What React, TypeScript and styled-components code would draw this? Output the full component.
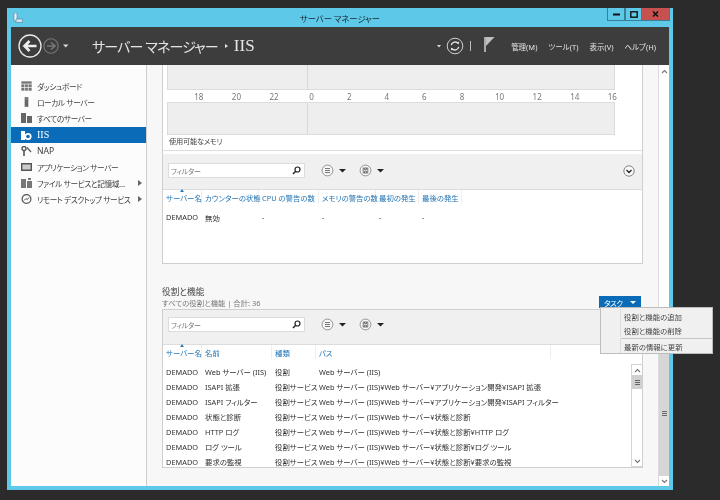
import React from "react";
import styled, { createGlobalStyle } from "styled-components";

const GlobalStyle = createGlobalStyle`
    html, body {
        margin: 0;
        padding: 0;
        background: #2b2b2b;
    }
    body {
        width: 720px;
        height: 500px;
        overflow: hidden;
        font-family: "Noto Sans", "Noto Sans CJK JP", sans-serif;
        font-feature-settings: "palt";
        font-size: 7.4px;
        color: #333;
    }
`;

const Page = styled.div`
    width: 720px;
    height: 500px;
    padding: 8px 47px 10px 7px;
    box-sizing: border-box;
    filter: blur(0.4px);
`;
const Window = styled.div`
    position: relative;
    height: 482px;
    display: flex;
    flex-direction: column;
    background: #5ec8e8;
    padding: 0 4px 4px;
    box-sizing: border-box;
`;
const TitleBar = styled.div`
    position: relative;
    height: 19px;
    flex: none;
    display: flex;
    align-items: center;
    justify-content: center;
    font-size: 8.3px;
    color: #14222a;
`;
const AppIcon = styled.svg`
    position: absolute;
    left: 2px;
    top: 5px;
`;
const WindowButtons = styled.div`
    position: absolute;
    top: 0;
    right: -1px;
    display: flex;
    height: 13px;
`;
const WindowButton = styled.div<{ $w: number; $close?: boolean }>`
    width: ${(p) => p.$w}px;
    display: flex;
    align-items: center;
    justify-content: center;
    box-sizing: border-box;
    background: ${(p) => (p.$close ? "#c75050" : "#5ec8e8")};
    border: 1px solid #3a7f96;
    border-top: none;
    border-left: ${(p) => (p.$close ? "none" : "1px solid #3a7f96")};
`;
const Header = styled.div`
    height: 38px;
    flex: none;
    display: flex;
    align-items: center;
    background: #3d3d3d;
    color: #e8e8e8;
`;
const NavIcons = styled.svg`
    margin-left: 6px;
    flex: none;
`;
const Crumb = styled.div`
    margin-left: 15px;
    font-size: 14px;
    letter-spacing: -0.85px;
    color: #e4e4e4;
    display: flex;
    align-items: center;
    flex: 1;
`;
const CrumbArrow = styled.span`
    width: 0;
    height: 0;
    margin: 0 6px 0 7px;
    border-left: 3px solid #e8e8e8;
    border-top: 2.5px solid transparent;
    border-bottom: 2.5px solid transparent;
`;
const SerifLabel = styled.span<{ $size: number }>`
    font-family: "Liberation Serif", serif;
    font-size: ${(p) => p.$size}px;
    letter-spacing: 0;
`;
const HeaderIcons = styled.svg`
    flex: none;
    margin-right: 8px;
`;
const MenuBar = styled.div`
    display: flex;
    font-size: 7.5px;
    padding-right: 13px;
    gap: 11px;
    color: #e2e2e2;
`;
const Body = styled.div`
    flex: 1;
    min-height: 0;
    display: flex;
    background: #f8f8f8;
`;
const Sidebar = styled.div`
    width: 135px;
    flex: none;
    padding-top: 13px;
    box-sizing: content-box;
    background: #fcfcfc;
    border-right: 1px solid #cfcfcf;
`;
const NavItem = styled.div<{ $active?: boolean }>`
    height: 16.2px;
    display: flex;
    align-items: center;
    padding-left: 10px;
    gap: 5px;
    font-size: 7.7px;
    letter-spacing: -0.4px;
    background: ${(p) => (p.$active ? "#0a6cb8" : "transparent")};
    color: ${(p) => (p.$active ? "#fff" : "#3c3c3c")};
`;
const NavIcon = styled.svg`
    flex: none;
`;
const NavLabel = styled.span`
    flex: 1;
    min-width: 0;
    white-space: nowrap;
`;
const LatinLabel = styled.span`
    font-size: 8.6px;
    letter-spacing: 0;
`;
const NavArrow = styled.span`
    flex: none;
    width: 0;
    height: 0;
    margin-right: 4px;
    border-left: 4px solid #666;
    border-top: 3px solid transparent;
    border-bottom: 3px solid transparent;
`;
const Content = styled.div`
    flex: 1;
    min-width: 0;
    overflow: hidden;
    padding: 0 17px 0 15px;
    background: #f7f7f7;
`;
const Panel = styled.div<{ $framed?: boolean }>`
    width: 479px;
    background: #fff;
    border-left: 1px solid #cfcfcf;
    border-right: 1px solid #cfcfcf;
    border-bottom: 1px solid #cfcfcf;
    border-top: ${(p) => (p.$framed ? "1px solid #cfcfcf" : "none")};
    position: relative;
`;
const ChartArea = styled.div`
    height: 85px;
    padding-left: 4px;
    border-bottom: 1px solid #dedede;
`;
const ChartBox = styled.div<{ $h: number }>`
    width: 448px;
    height: ${(p) => p.$h}px;
    box-sizing: border-box;
    background: #eeeeee;
    border: 1px solid #dcdcdc;
    border-top: ${(p) => (p.$h === 25 ? "none" : "1px solid #dcdcdc")};
    display: flex;
    justify-content: flex-start;
`;
const ChartMark = styled.div`
    width: 1px;
    margin-left: 139px;
    background: #c5deea;
`;
const Axis = styled.div`
    height: 12px;
    width: 460px;
    display: grid;
    grid-template-columns: repeat(12, 37.6px);
    margin-left: 13px;
    align-items: center;
    font-size: 8px;
    color: #777;
`;
const AxisTick = styled.span`
    text-align: center;
`;
const Caption = styled.div`
    padding-left: 2px;
    font-size: 7.2px;
    line-height: 12px;
    letter-spacing: -0.2px;
    color: #444;
`;
const Toolbar = styled.div<{ $top?: boolean; $h: number; $lift: number }>`
    height: ${(p) => p.$h}px;
    margin-top: ${(p) => (p.$top ? "3px" : "0")};
    box-sizing: border-box;
    background: #f0f0f0;
    border-bottom: 1px solid #dcdcdc;
    display: flex;
    align-items: center;
    padding: 0 7px ${(p) => p.$lift}px 5px;
`;
const FilterBox = styled.div`
    width: 137px;
    height: 15px;
    margin-right: 8px;
    flex: none;
    box-sizing: border-box;
    padding: 0 3px 0 2px;
    display: flex;
    align-items: center;
    justify-content: space-between;
    background: #fff;
    border: 1px solid #dcdcdc;
    color: #777;
    font-size: 7px;
    letter-spacing: -0.2px;
`;
const ToolGroup = styled.svg`
    flex: none;
    margin-left: 8px;
`;
const ToolSpacer = styled.div`
    flex: 1;
`;
const HeaderRow = styled.div<{ $cols: string }>`
    height: 14px;
    display: grid;
    grid-template-columns: ${(p) => p.$cols};
`;
const HeaderCell = styled.div`
    position: relative;
    display: flex;
    align-items: center;
    padding-left: 3px;
    border-right: 1px solid #eeeeee;
    color: #1f72b3;
    white-space: nowrap;
`;
const SortMark = styled.span`
    position: absolute;
    top: -1px;
    left: 17px;
    border-bottom: 3px solid #2b7bb9;
    border-left: 2px solid transparent;
    border-right: 2px solid transparent;
`;
const DataRow = styled.div<{ $cols: string }>`
    height: 15px;
    display: grid;
    grid-template-columns: ${(p) => p.$cols};
    align-items: center;
    white-space: nowrap;
    color: #2f2f2f;
`;
const DataCell = styled.div`
    padding-left: 3px;
`;
const TopRows = styled.div`
    padding-top: 5.5px;
    height: 53.5px;
`;
const RoleHead = styled.div`
    height: 45px;
    box-sizing: border-box;
    padding-top: 23px;
    position: relative;
`;
const RoleTitle = styled.div`
    font-size: 8.7px;
    line-height: 11px;
    color: #444;
`;
const RoleSub = styled.div`
    font-size: 7.4px;
    line-height: 11px;
    color: #777;
`;
const TaskButton = styled.div`
    position: absolute;
    right: 0;
    bottom: 1px;
    width: 42px;
    height: 12px;
    box-sizing: border-box;
    padding: 0 5px;
    display: flex;
    align-items: center;
    justify-content: space-between;
    background: #0a6cb8;
    color: #fff;
    font-size: 7.4px;
    letter-spacing: -0.3px;
`;
const DownCaret = styled.span`
    border-top: 3px solid #fff;
    border-left: 3.5px solid transparent;
    border-right: 3.5px solid transparent;
`;
const TaskMenu = styled.div`
    position: absolute;
    left: 593px;
    top: 299px;
    width: 113px;
    box-sizing: border-box;
    padding: 1px 0 0;
    background: #f0f0f0;
    border: 1px solid #bdbdbd;
    z-index: 2;
`;
const MenuItem = styled.div`
    height: 14px;
    margin-left: 19px;
    padding-left: 3px;
    display: flex;
    align-items: center;
    border-left: 1px solid #dcdcdc;
    font-size: 7.4px;
    color: #444;
`;
const MenuRule = styled.div`
    height: 1px;
    margin: 1px 0 0 20px;
    background: #c4c4c4;
`;
const RolesBody = styled.div`
    display: flex;
    height: 103px;
    overflow: hidden;
    padding-top: 5px;
`;
const RolesRows = styled.div`
    flex: 1;
    min-width: 0;
    overflow: hidden;
`;
const InnerBar = styled.div`
    width: 11px;
    flex: none;
    display: flex;
    flex-direction: column;
    box-sizing: border-box;
    background: #fff;
    border: 1px solid #d4d4d4;
    border-right: none;
`;
const ArrowBtn = styled.div`
    height: 10px;
    flex: none;
    display: flex;
    align-items: center;
    justify-content: center;
`;
const InnerThumb = styled.div`
    height: 14px;
    background: #d0d0d0;
    display: flex;
    align-items: center;
    justify-content: center;
`;
const Track = styled.div`
    flex: 1;
`;
const PageBar = styled.div`
    width: 11px;
    flex: none;
    display: flex;
    flex-direction: column;
    padding-top: 1px;
    box-sizing: border-box;
    background: #fff;
    border-left: 1px solid #dcdcdc;
`;
const PageThumb = styled.div`
    height: 126px;
    background: #d6d6d6;
    display: flex;
    align-items: center;
    justify-content: center;
`;

const Chevron = ({ up }: { up?: boolean }) => (
    <svg width="7" height="5" viewBox="0 0 7 5">
        <path d={up ? "M1 4L3.5 1.5L6 4" : "M1 1L3.5 3.5L6 1"} fill="none" stroke="#777" strokeWidth="1.1" />
    </svg>
);
const Grip = () => (
    <svg width="5" height="5" viewBox="0 0 5 5">
        <path d="M0 .5h5M0 2.5h5M0 4.5h5" stroke="#666" strokeWidth="1" />
    </svg>
);
const Search = () => (
    <svg width="9" height="9" viewBox="0 0 9 9">
        <circle cx="5.5" cy="3.5" r="2.5" fill="none" stroke="#222" strokeWidth="1.2" />
        <path d="M3.7 5.3L1 8" stroke="#222" strokeWidth="1.5" />
    </svg>
);
const ToolIcon = ({ kind }: { kind: "list" | "save" }) => (
    <ToolGroup width="30" height="13" viewBox="0 0 30 13">
        <circle cx="6.5" cy="6.5" r="5.4" fill="#f6f6f6" stroke="#888" strokeWidth="0.9" />
        {kind === "list" ? (
            <path d="M4 4.5h5M4 6.5h5M4 8.5h5" stroke="#777" strokeWidth="1" />
        ) : (
            <path d="M4.2 4h4.6v5H4.2zM5.5 4v1.6h2V4M5.5 9V7.2h2V9" fill="none" stroke="#666" strokeWidth="0.9" />
        )}
        <path d="M18 5h7l-3.5 3.5z" fill="#222" />
    </ToolGroup>
);

const Filter = () => (
    <FilterBox>
        フィルター
        <Search />
    </FilterBox>
);

const navIcons: Record<string, React.ReactNode> = {
    dash: <path d="M0 0h11v10H0zM0 3h11M3.6 3v7M7.3 3v7M0 6.5h11" fill="#777" stroke="#f5f5f5" strokeWidth="0.7" />,
    local: <path d="M3.5 0h4v10h-4z M4.5 2h2" fill="#666" stroke="#eee" strokeWidth="0.4" />,
    all: <path d="M0 0h5v10H0zM6 3h5v7H6z" fill="#666" />,
    iis: (
        <g>
            <path d="M0 1h4v9H0z" fill="#fff" />
            <circle cx="7" cy="6.5" r="3.6" fill="#fff" />
            <circle cx="7" cy="6.5" r="1.8" fill="#0a6cb8" />
        </g>
    ),
    nap: (
        <g fill="none" stroke="#555">
            <circle cx="3" cy="2.5" r="2" strokeWidth="1.4" />
            <path d="M3 4.5V10" strokeWidth="1.6" />
            <path d="M6 1.5L10 6" strokeWidth="1.2" />
        </g>
    ),
    app: <path d="M.7 1.7h9.6v6.6H.7z" fill="#ccc" stroke="#555" strokeWidth="1.4" />,
    file: <path d="M0 1h5v9H0zM6 3h5v7H6z M7 0h3v2H7z" fill="#777" />,
    remote: (
        <g fill="none" stroke="#555">
            <circle cx="5.5" cy="5" r="4.4" strokeWidth="1.2" />
            <path d="M3 6.5L5 4.5L6.3 5.6L8 3.5" strokeWidth="1" />
        </g>
    ),
};

const navItems = [
    { icon: "dash", label: "ダッシュボード" },
    { icon: "local", label: "ローカル サーバー" },
    { icon: "all", label: "すべてのサーバー" },
    { icon: "iis", label: "IIS", active: true },
    { icon: "nap", label: "NAP", latin: true },
    { icon: "app", label: "アプリケーション サーバー" },
    { icon: "file", label: "ファイル サービスと記憶域…", more: true },
    { icon: "remote", label: "リモート デスクトップ サービス", more: true },
];

const topCols = "39px 57px 60px 57px 43px 43px";
const roleCols = "39px 70px 44px 1fr";
const base = "Web サーバー (IIS)¥Web サーバー¥";
const roles = [
    ["Web サーバー (IIS)", "役割", "Web サーバー (IIS)"],
    ["ISAPI 拡張", "役割サービス", base + "アプリケーション開発¥ISAPI 拡張"],
    ["ISAPI フィルター", "役割サービス", base + "アプリケーション開発¥ISAPI フィルター"],
    ["状態と診断", "役割サービス", base + "状態と診断"],
    ["HTTP ログ", "役割サービス", base + "状態と診断¥HTTP ログ"],
    ["ログ ツール", "役割サービス", base + "状態と診断¥ログ ツール"],
    ["要求の監視", "役割サービス", base + "状態と診断¥要求の監視"],
];

function navLabel(item: (typeof navItems)[number]) {
    if (item.active) return <SerifLabel $size={10}>IIS</SerifLabel>;
    if (item.latin) return <LatinLabel>{item.label}</LatinLabel>;
    return item.label;
}

function App() {
    return (
        <Page>
            <GlobalStyle />
            <Window>
                <TitleBar>
                    <AppIcon width="10" height="10" viewBox="0 0 10 10">
                        <path d="M1 0h3v8H1z" fill="#e8f4fa" stroke="#4a7f99" strokeWidth="0.6" />
                        <path d="M3 6h6.5v3.5H3z" fill="#cfe4ef" stroke="#4a7f99" strokeWidth="0.6" />
                    </AppIcon>
                    サーバー マネージャー
                    <WindowButtons>
                        <WindowButton $w={18}>
                            <svg width="7" height="3"><rect y="0.5" width="7" height="2" fill="#111" /></svg>
                        </WindowButton>
                        <WindowButton $w={17}>
                            <svg width="8" height="7"><rect x="0.8" y="0.8" width="6.4" height="5.4" fill="none" stroke="#111" strokeWidth="1.4" /></svg>
                        </WindowButton>
                        <WindowButton $w={28} $close>
                            <svg width="7" height="6"><path d="M1 .5L6 5.5M6 .5L1 5.5" stroke="#111" strokeWidth="1.5" /></svg>
                        </WindowButton>
                    </WindowButtons>
                </TitleBar>
                <Header>
                    <NavIcons width="60" height="26" viewBox="0 0 60 26">
                        <circle cx="13" cy="13" r="11" fill="none" stroke="#e8e8e8" strokeWidth="1.3" />
                        <path d="M19.5 13H8M12.5 8L7.5 13L12.5 18" fill="none" stroke="#efefef" strokeWidth="2.6" />
                        <circle cx="34" cy="13" r="7.2" fill="none" stroke="#777" strokeWidth="1.1" />
                        <path d="M38 13H30.5M34 9.5L30 13L34 16.5" fill="none" stroke="#777" strokeWidth="1.6" transform="rotate(180 34 13)" />
                        <path d="M46 11.5h5.5L48.75 14.5z" fill="#d8d8d8" />
                    </NavIcons>
                    <Crumb>
                        サーバー マネージャー
                        <CrumbArrow />
                        <SerifLabel $size={17}>IIS</SerifLabel>
                    </Crumb>
                    <HeaderIcons width="66" height="24" viewBox="0 0 66 24">
                        <path d="M0 11h4L2 13.5z" fill="#ddd" />
                        <circle cx="18" cy="12" r="7.8" fill="none" stroke="#cfcfcf" strokeWidth="1" />
                        <path d="M14.2 11.2a4 4 0 0 1 7-1.7M21.8 12.8a4 4 0 0 1-7 1.7" fill="none" stroke="#e4e4e4" strokeWidth="1.3" />
                        <path d="M19.5 8.2l2.4-.4.2 2.6zM16.5 15.8l-2.4.4-.2-2.6z" fill="#e4e4e4" />
                        <path d="M33.5 7v10" stroke="#bbb" strokeWidth="1" />
                        <path d="M47 3h2V18h-2z" fill="#aaa" />
                        <path d="M49 3h8.5L49 12z" fill="#c0c0c0" />
                    </HeaderIcons>
                    <MenuBar>
                        <span>管理(M)</span>
                        <span>ツール(T)</span>
                        <span>表示(V)</span>
                        <span>ヘルプ(H)</span>
                    </MenuBar>
                </Header>
                <Body>
                    <Sidebar>
                        {navItems.map((item) => (
                            <NavItem key={item.label} $active={item.active}>
                                <NavIcon width="11" height="10" viewBox="0 0 11 10">{navIcons[item.icon]}</NavIcon>
                                <NavLabel>{navLabel(item)}</NavLabel>
                                {item.more && <NavArrow />}
                            </NavItem>
                        ))}
                    </Sidebar>
                    <Content>
                        <Panel>
                            <ChartArea>
                                <ChartBox $h={25}>
                                    <ChartMark />
                                </ChartBox>
                                <Axis>
                                    {[18, 20, 22, 0, 2, 4, 6, 8, 10, 12, 14, 16].map((t) => (
                                        <AxisTick key={t}>{t}</AxisTick>
                                    ))}
                                </Axis>
                                <ChartBox $h={33}>
                                    <ChartMark />
                                </ChartBox>
                                <Caption>使用可能なメモリ</Caption>
                            </ChartArea>
                            <Toolbar $top $h={36} $lift={2}>
                                <Filter />
                                <ToolIcon kind="list" />
                                <ToolIcon kind="save" />
                                <ToolSpacer />
                                <svg width="12" height="12" viewBox="0 0 12 12">
                                    <circle cx="6" cy="6" r="5.2" fill="#f8f8f8" stroke="#777" strokeWidth="0.9" />
                                    <path d="M3.5 5L6 7.5L8.5 5" fill="none" stroke="#222" strokeWidth="1.3" />
                                </svg>
                            </Toolbar>
                            <HeaderRow $cols={topCols}>
                                <HeaderCell>サーバー名<SortMark /></HeaderCell>
                                <HeaderCell>カウンターの状態</HeaderCell>
                                <HeaderCell>CPU の警告の数</HeaderCell>
                                <HeaderCell>メモリの警告の数</HeaderCell>
                                <HeaderCell>最初の発生</HeaderCell>
                                <HeaderCell>最後の発生</HeaderCell>
                            </HeaderRow>
                            <TopRows>
                                <DataRow $cols={topCols}>
                                    <DataCell>DEMADO</DataCell>
                                    <DataCell>無効</DataCell>
                                    <DataCell>-</DataCell>
                                    <DataCell>-</DataCell>
                                    <DataCell>-</DataCell>
                                    <DataCell>-</DataCell>
                                </DataRow>
                            </TopRows>
                        </Panel>
                        <RoleHead>
                            <RoleTitle>役割と機能</RoleTitle>
                            <RoleSub>すべての役割と機能 | 合計: 36</RoleSub>
                            <TaskButton>
                                タスク
                                <DownCaret />
                            </TaskButton>
                        </RoleHead>
                        <Panel $framed>
                            <Toolbar $h={35} $lift={5}>
                                <Filter />
                                <ToolIcon kind="list" />
                                <ToolIcon kind="save" />
                            </Toolbar>
                            <HeaderRow $cols="39px 70px 44px 235px">
                                <HeaderCell>サーバー名<SortMark /></HeaderCell>
                                <HeaderCell>名前</HeaderCell>
                                <HeaderCell>種類</HeaderCell>
                                <HeaderCell>パス</HeaderCell>
                            </HeaderRow>
                            <RolesBody>
                                <RolesRows>
                                    {roles.map(([name, kind, path]) => (
                                        <DataRow key={path} $cols={roleCols}>
                                            <DataCell>DEMADO</DataCell>
                                            <DataCell>{name}</DataCell>
                                            <DataCell>{kind}</DataCell>
                                            <DataCell>{path}</DataCell>
                                        </DataRow>
                                    ))}
                                </RolesRows>
                                <InnerBar>
                                    <ArrowBtn><Chevron up /></ArrowBtn>
                                    <InnerThumb><Grip /></InnerThumb>
                                    <Track />
                                    <ArrowBtn><Chevron /></ArrowBtn>
                                </InnerBar>
                            </RolesBody>
                        </Panel>
                    </Content>
                    <PageBar>
                        <ArrowBtn><Chevron up /></ArrowBtn>
                        <Track />
                        <PageThumb><Grip /></PageThumb>
                        <ArrowBtn><Chevron /></ArrowBtn>
                    </PageBar>
                </Body>
                <TaskMenu>
                    <MenuItem>役割と機能の追加</MenuItem>
                    <MenuItem>役割と機能の削除</MenuItem>
                    <MenuRule />
                    <MenuItem>最新の情報に更新</MenuItem>
                </TaskMenu>
            </Window>
        </Page>
    );
}

export default App;
